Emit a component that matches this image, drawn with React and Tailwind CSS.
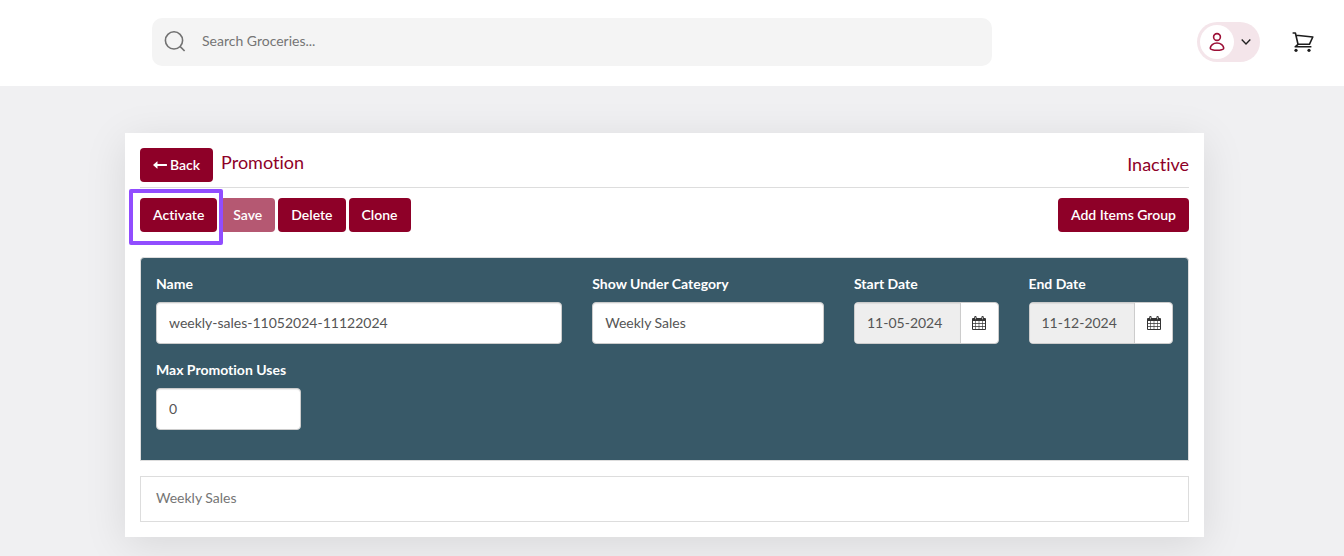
import { useState } from 'react';

const LongArrowLeft = () => (
  <svg className="w-[14px] h-[10px]" viewBox="0 0 14 10" fill="currentColor" aria-hidden="true">
    <path d="M0 5 L4 1.4 Q4.5 1.1 4.5 1.7 V4 H13.6 Q14 4 14 4.4 V5.6 Q14 6 13.6 6 H4.5 V8.3 Q4.5 8.9 4 8.6 Z" />
  </svg>
);

const CalendarIcon = () => (
  <svg className="w-[14px] h-[14px]" viewBox="0 0 14 14" aria-hidden="true">
    <path
      fill="#333"
      fillRule="evenodd"
      d="M1 2h1.2v-.8a1.2 1.2 0 0 1 2.4 0V2h4.8v-.8a1.2 1.2 0 0 1 2.4 0V2H13a1 1 0 0 1 1 1v10a1 1 0 0 1-1 1H1a1 1 0 0 1-1-1V3a1 1 0 0 1 1-1z
        M1 5v2h2.4V5z M4 5v2h2.7V5z M7.3 5v2H10V5z M10.6 5v2H13V5z
        M1 7.7v2.3h2.4V7.7z M4 7.7v2.3h2.7V7.7z M7.3 7.7v2.3H10V7.7z M10.6 7.7v2.3H13V7.7z
        M1 10.7V13h2.4v-2.3z M4 10.7V13h2.7v-2.3z M7.3 10.7V13H10v-2.3z M10.6 10.7V13H13v-2.3z
        M3.1 1.2v2h.6v-2z M10.3 1.2v2h.6v-2z"
    />
  </svg>
);

const SearchIcon = () => (
  <svg className="w-[22px] h-[22px] shrink-0" viewBox="0 0 22 22" fill="none" stroke="#727272" strokeWidth="1.6" aria-hidden="true">
    <circle cx="10" cy="9.4" r="8.6" />
    <path d="M16 15.4l4.6 4.6" />
  </svg>
);

const UserIcon = () => (
  <svg className="w-4 h-[20px]" viewBox="0 0 16 20" fill="none" stroke="#9c0f36" strokeWidth="1.6" aria-hidden="true">
    <circle cx="8" cy="5" r="3.4" />
    <path d="M8 11C4.2 11 1.4 13.5 1.2 16.4C1.1 17.4 4.6 18.2 8 18.2C11.4 18.2 14.9 17.4 14.8 16.4C14.6 13.5 11.8 11 8 11Z" />
  </svg>
);

const CartIcon = () => (
  <svg className="w-[22px] h-[20px]" viewBox="0 0 22 20" fill="none" stroke="#1c1c1c" strokeWidth="1.6" aria-hidden="true">
    <path d="M0.6 1H3.4L6 12.3H17.4L20.8 5L4.2 3.2" strokeLinejoin="round" />
    <path d="M6 12.3L3.2 14.8H19.4" strokeLinejoin="round" />
    <circle cx="4" cy="18.3" r="1.6" fill="#1c1c1c" stroke="none" />
    <circle cx="17" cy="18.3" r="1.6" fill="#1c1c1c" stroke="none" />
  </svg>
);

const Button = ({ children, disabled }) => (
  <button
    type="button"
    disabled={disabled}
    className="h-[34px] px-[13px] rounded bg-[#8e0028] text-white text-sm font-semibold whitespace-nowrap disabled:opacity-65"
  >
    {children}
  </button>
);

const Field = ({ id, label, className, children }) => (
  <div className={className}>
    <label htmlFor={id} className="block mb-2 text-sm leading-5 font-bold text-white">
      {label}
    </label>
    {children}
  </div>
);

const TextInput = ({ id, initial }) => {
  const [value, setValue] = useState(initial);
  return (
    <input
      id={id}
      type="text"
      value={value}
      onChange={(e) => setValue(e.target.value)}
      className="block w-full h-[42px] px-3 pb-0.5 rounded border border-[#ccc] bg-white text-sm text-[#555] shadow-[inset_0_1px_1px_rgba(0,0,0,0.075)]"
    />
  );
};

const DateInput = ({ id, value }) => (
  <div className="flex h-[42px] rounded border border-[#ccc] bg-white overflow-hidden">
    <input
      id={id}
      type="text"
      readOnly
      value={value}
      className="flex-1 min-w-0 px-3 bg-[#eee] text-sm text-[#555] shadow-[inset_0_1px_1px_rgba(0,0,0,0.075)]"
    />
    <button type="button" aria-label="Open calendar" className="flex items-center justify-center w-[38px] border-l border-[#ccc]">
      <CalendarIcon />
    </button>
  </div>
);

const Header = () => (
  <header className="flex items-center h-[86px] pb-0.5 pl-[152px] pr-[30px] bg-white">
    <div className="flex items-center gap-4 flex-1 max-w-[840px] h-12 pl-3 rounded-[10px] bg-[#f4f4f4]">
      <SearchIcon />
      <input
        type="text"
        aria-label="Search Groceries"
        placeholder="Search Groceries..."
        className="flex-1 h-full pb-1 bg-transparent text-sm text-[#555] placeholder:text-[#757575] outline-none"
      />
    </div>
    <div className="flex items-center gap-8 ml-auto">
      <button type="button" aria-label="Account" className="flex items-center w-[63px] h-10 pl-[3px] gap-[7px] rounded-full bg-[#f4e5ea]">
        <span className="flex items-center justify-center w-[34px] h-[34px] rounded-full bg-white">
          <UserIcon />
        </span>
        <svg className="w-[10px] h-[6px]" viewBox="0 0 10 6" fill="none" stroke="#222" strokeWidth="1.4" aria-hidden="true">
          <path d="M0.7 0.6L5 4.9L9.3 0.6" />
        </svg>
      </button>
      <button type="button" aria-label="Cart">
        <CartIcon />
      </button>
    </div>
  </header>
);

const App = () => {
  return (
    <div className="min-h-screen bg-[#f0f0f2] font-['Lato',sans-serif] [font-variant-ligatures:none]">
      <Header />

      <main className="pt-[47px] pb-4 pl-[125px] pr-[140px]">
        <div className="p-[15px] bg-white shadow-[0_8px_40px_rgba(0,0,0,0.1)]">
          {/* Title row */}
          <div className="flex justify-between pb-[5px] border-b border-[#ddd] text-[#8e0028]">
            <div className="flex gap-2">
              <Button>
                <span className="flex items-center gap-[3px]">
                  <LongArrowLeft />
                  Back
                </span>
              </Button>
              <h1 className="text-lg leading-7">Promotion</h1>
            </div>
            <span className="text-lg leading-8">Inactive</span>
          </div>

          {/* Actions */}
          <div className="flex justify-between pt-[10px]">
            <div className="flex gap-[3px]">
              <div className="relative z-10">
                <Button>Activate</Button>
                <div className="absolute -top-[9px] -bottom-[13px] -left-[11px] -right-[6px] rounded-xs border-4 border-[#914dff] pointer-events-none" />
              </div>
              <Button disabled>Save</Button>
              <Button>Delete</Button>
              <Button>Clone</Button>
            </div>
            <Button>Add Items Group</Button>
          </div>

          {/* Promotion details */}
          <form className="grid grid-cols-12 gap-x-[30px] gap-y-4 mt-[25px] px-[15px] pt-4 pb-[30px] rounded-t border border-[#ddd] bg-[#385968]">
            <Field id="name" label="Name" className="col-span-5">
              <TextInput id="name" initial="weekly-sales-11052024-11122024" />
            </Field>
            <Field id="category" label="Show Under Category" className="col-span-3">
              <TextInput id="category" initial="Weekly Sales" />
            </Field>
            <Field id="start" label="Start Date" className="col-span-2">
              <DateInput id="start" value="11-05-2024" />
            </Field>
            <Field id="end" label="End Date" className="col-span-2">
              <DateInput id="end" value="11-12-2024" />
            </Field>
            <Field id="uses" label="Max Promotion Uses" className="col-span-2">
              <TextInput id="uses" initial="0" />
            </Field>
          </form>

          <div className="mt-[15px] px-[15px] pt-[11px] pb-[13px] border border-[#ddd] text-sm leading-5 text-[#757575]">
            Weekly Sales
          </div>
        </div>
      </main>
    </div>
  );
};

export default App;
